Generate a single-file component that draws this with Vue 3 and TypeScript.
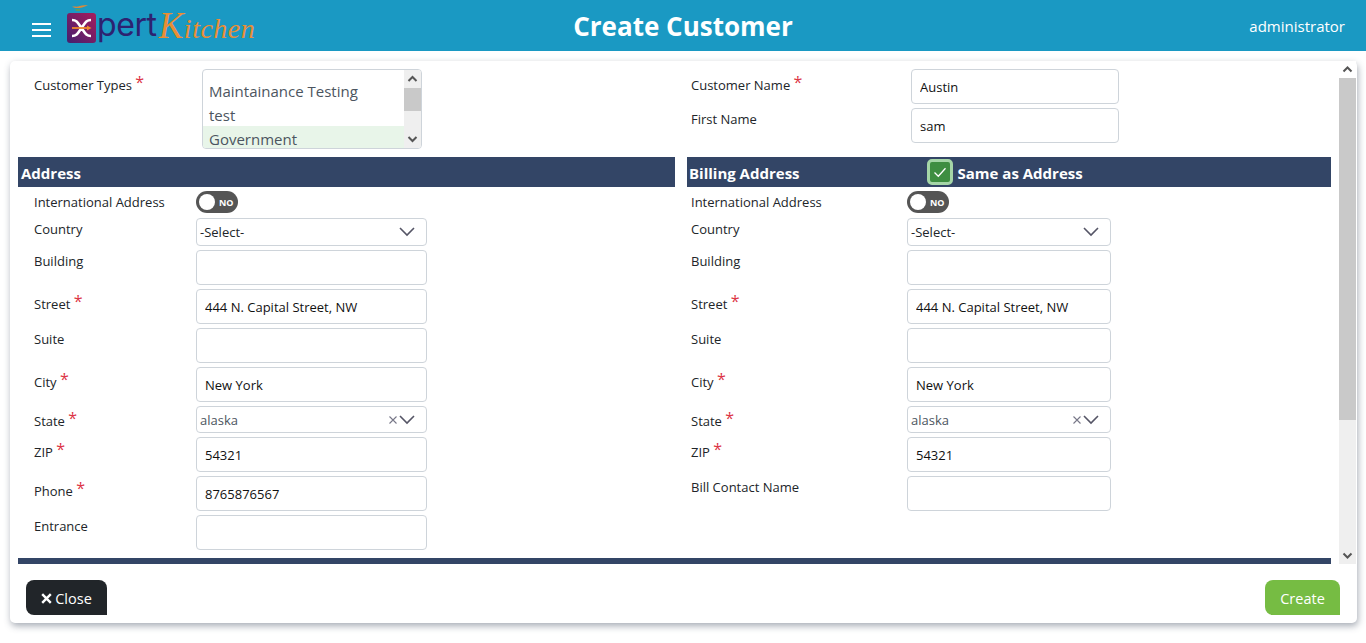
<template>
  <div class="page">
    <header class="topbar">
      <div class="brand">
        <button class="burger" aria-label="menu"><span></span><span></span><span></span></button>
        <div class="logo">
          <svg class="logo-mark" width="32" height="44" viewBox="0 0 32 44">
            <defs>
              <linearGradient id="markFill" x1="0" y1="1" x2="1" y2="0">
                <stop offset="0" stop-color="#43206f" />
                <stop offset="1" stop-color="#a81c5c" />
              </linearGradient>
            </defs>
            <path d="M5 7c2-1 4 0 6-.5s5-1.500 10-1.500c-2 1-4 2-6 2.500s-3 .5-5 .5-3-.5-5-1z" fill="#d98a3a" />
            <path d="M8 9h5v2H9z" fill="#5c9a68" />
            <rect x="0" y="13" width="29" height="30" rx="3" fill="url(#markFill)" />
            <path d="M5 20c5 0 6 3 9.500 8 -3.500 5-4.500 8-9.500 8M24 20c-5 0-6 3-9.500 8 3.500 5 4.500 8 9.500 8" fill="none" stroke="#fff" stroke-width="2.600" />
            <path d="M5 28h17" stroke="#ee8a2c" stroke-width="1.800" />
            <path d="M20 25.500l4.500 2.500-4.500 2.500z" fill="#ee8a2c" />
          </svg>
          <span class="logo-pert">pert</span>
          <span class="logo-kitchen">Kitchen</span>
        </div>
      </div>
      <h1 class="title">Create Customer</h1>
      <div class="user">administrator</div>
    </header>

    <main class="panel">
      <div class="body">
        <div class="content">
          <section class="top-row">
            <div class="top-left">
              <label class="top-label">Customer Types <i>*</i></label>
              <div class="listbox">
                <div class="list-items">
                  <div class="opt blank"></div>
                  <div class="opt">Maintainance Testing</div>
                  <div class="opt">test</div>
                  <div class="opt picked">Government</div>
                </div>
                <div class="list-bar">
                  <svg width="17" height="18" viewBox="0 0 17 18"><path d="M4.500 11l4-4 4 4" fill="none" stroke="#555" stroke-width="2" /></svg>
                  <div class="list-track"><div class="list-thumb"></div></div>
                  <svg width="17" height="18" viewBox="0 0 17 18"><path d="M4.500 7l4 4 4-4" fill="none" stroke="#555" stroke-width="2" /></svg>
                </div>
              </div>
            </div>
            <div class="top-right">
              <div class="name-row">
                <label class="name-label first">Customer Name <i>*</i></label>
                <input class="text-input name-input" value="Austin" />
              </div>
              <div class="name-row">
                <label class="name-label">First Name</label>
                <input class="text-input name-input" value="sam" />
              </div>
            </div>
          </section>

          <section class="columns">
            <div v-for="col in columns" :key="col.id" class="col" :class="col.id">
              <div class="band">
                <span class="band-title">{{ col.title }}</span>
                <template v-if="col.id === 'billing'">
                  <span class="check">
                    <svg width="18" height="18" viewBox="0 0 18 18"><path d="M3.500 9.500l3.800 3.800 7.200-8" fill="none" stroke="#fff" stroke-width="1.300" /></svg>
                  </span>
                  <span class="band-title">Same as Address</span>
                </template>
              </div>

              <div class="field intl">
                <label>International Address</label>
                <div class="toggle"><span class="knob"></span><span class="toggle-text">NO</span></div>
              </div>

              <div
                v-for="f in col.fields"
                :key="f.label"
                class="field"
                :class="{ req: f.required, 'has-select': f.kind === 'select' }"
              >
                <label>{{ f.label }} <i v-if="f.required">*</i></label>
                <div v-if="f.kind === 'select'" class="select">
                  <span>-Select-</span>
                  <svg width="16" height="10" viewBox="0 0 16 10"><path d="M1 1l7 7 7-7" fill="none" stroke="#556" stroke-width="1.600" /></svg>
                </div>
                <div v-else-if="f.kind === 'combo'" class="select combo">
                  <span>{{ f.value }}</span>
                  <span class="combo-icons">
                    <svg width="10" height="10" viewBox="0 0 10 10"><path d="M1.500 1.500l7 7M8.500 1.500l-7 7" stroke="#778" stroke-width="1.100" /></svg>
                    <svg width="16" height="10" viewBox="0 0 16 10"><path d="M1 1l7 7 7-7" fill="none" stroke="#556" stroke-width="1.600" /></svg>
                  </span>
                </div>
                <input v-else class="text-input" :value="f.value" />
              </div>
            </div>
          </section>
          <div class="band-end"></div>
        </div>

        <div class="scrollbar">
          <svg width="17" height="17" viewBox="0 0 17 17"><path d="M4.500 10.500l4-4 4 4" fill="none" stroke="#555" stroke-width="2" /></svg>
          <div class="track"><div class="thumb"></div></div>
          <svg width="17" height="17" viewBox="0 0 17 17"><path d="M4.500 6.500l4 4 4-4" fill="none" stroke="#555" stroke-width="2" /></svg>
        </div>
      </div>

      <footer class="actions">
        <button class="btn close"><svg width="11" height="11" viewBox="0 0 11 11"><path d="M1.200 1.200l8.600 8.600M9.800 1.200l-8.600 8.600" stroke="#fff" stroke-width="2.400" /></svg>Close</button>
        <button class="btn create">Create</button>
      </footer>
    </main>
  </div>
</template>

<script setup lang="ts">
type Field = {
  label: string;
  value?: string;
  required?: boolean;
  kind?: 'select' | 'combo';
};

const shared: Field[] = [
  { label: 'Country', kind: 'select' },
  { label: 'Building' },
  { label: 'Street', value: '444 N. Capital Street, NW', required: true },
  { label: 'Suite' },
  { label: 'City', value: 'New York', required: true },
  { label: 'State', value: 'alaska', required: true, kind: 'combo' },
  { label: 'ZIP', value: '54321', required: true },
];

const columns = [
  {
    id: 'address',
    title: 'Address',
    fields: [
      ...shared,
      { label: 'Phone', value: '8765876567', required: true },
      { label: 'Entrance' },
    ] as Field[],
  },
  {
    id: 'billing',
    title: 'Billing Address',
    fields: [...shared, { label: 'Bill Contact Name' }] as Field[],
  },
];
</script>

<style scoped>
.page {
  height: 643px;
  display: flex;
  flex-direction: column;
  font-family: "Open Sans", "Noto Sans", sans-serif;
  font-size: 13px;
  color: #212529;
}

.topbar {
  position: relative;
  height: 51px;
  flex: none;
  display: flex;
  align-items: center;
  justify-content: space-between;
  background: #1a99c3;
  color: #fff;
  padding: 0 21px 0 32px;
}

.brand {
  display: flex;
  align-items: center;
}

.burger {
  width: 19px;
  margin: 9px 16px 0 0;
  padding: 0;
  border: 0;
  background: none;
  display: flex;
  flex-direction: column;
  gap: 4px;
}

.burger span {
  height: 2px;
  background: #fff;
}

.logo {
  display: flex;
  align-items: flex-end;
  height: 51px;
}

.logo-mark {
  margin: 0 0 7px 0;
}

.logo-pert {
  font-family: "Inter", sans-serif;
  font-size: 32px;
  line-height: 40px;
  color: #2d2270;
  margin: 0 0 6px -2px;
  letter-spacing: -0.4px;
}

.logo-kitchen {
  font-family: "Liberation Serif", serif;
  font-style: italic;
  font-size: 28px;
  line-height: 38px;
  color: #e98e35;
  margin: 0 0 3px 2px;
  letter-spacing: 0.5px;
}

.logo-kitchen::first-letter {
  font-size: 37px;
}

.title {
  position: absolute;
  left: 0;
  right: 0;
  margin: 0;
  text-align: center;
  font-size: 26px;
  font-weight: 700;
}

.user {
  font-size: 15px;
}

.panel {
  margin: 10px 9px 0 10px;
  height: 562px;
  box-sizing: border-box;
  background: #fff;
  border-radius: 5px;
  box-shadow: 1px 3px 7px rgba(60, 70, 90, 0.45);
  display: flex;
  flex-direction: column;
}

.body {
  height: 503px;
  display: flex;
  overflow: hidden;
}

.content {
  width: 1313px;
  margin: 0 8px;
  flex: none;
}

.scrollbar {
  width: 17px;
  flex: none;
  display: flex;
  flex-direction: column;
  background: #efefef;
}

.scrollbar svg {
  flex: none;
  background: #fff;
}

.scrollbar svg:last-child {
  background: #efefef;
}

.track {
  flex: 1;
}

.thumb {
  height: 342px;
  background: #c9c9c9;
}

.top-row {
  height: 96px;
  display: flex;
  gap: 12px;
}

.top-left {
  width: 657px;
  box-sizing: border-box;
  padding: 8px 0 0 16px;
  display: flex;
}

.top-label {
  width: 168px;
  padding-top: 7px;
  line-height: 18px;
}

i {
  color: #dc3545;
  font-style: normal;
  font-size: 16px;
  line-height: 10px;
  vertical-align: 2px;
}

.listbox {
  width: 220px;
  height: 80px;
  box-sizing: border-box;
  border: 1px solid #ced4da;
  border-radius: 4px;
  display: flex;
  overflow: hidden;
}

.list-items {
  flex: 1;
  overflow: hidden;
}

.opt {
  height: 24px;
  line-height: 24px;
  padding-left: 6px;
  font-size: 15px;
  color: #4c5560;
}

.opt.blank {
  height: 9px;
}

.opt.picked {
  background: #e8f5e9;
  margin-top: -1px;
  line-height: 26px;
}

.list-bar {
  width: 17px;
  flex: none;
  background: #efefef;
  display: flex;
  flex-direction: column;
}

.list-bar svg {
  flex: none;
}

.list-track {
  flex: 1;
}

.list-thumb {
  height: 23px;
  background: #c9c9c9;
}

.top-right {
  padding: 8px 0 0 4px;
  display: flex;
  flex-direction: column;
  gap: 4px;
}

.name-row {
  display: flex;
}

.name-label {
  width: 220px;
  padding-top: 2px;
  line-height: 18px;
}

.name-label.first {
  padding-top: 7px;
}

.text-input {
  width: 231px;
  height: 35px;
  box-sizing: border-box;
  border: 1px solid #ced4da;
  border-radius: 4px;
  padding: 1px 8px 0;
  font: inherit;
  color: #111;
  outline: none;
  background: #fff;
}

.name-input {
  width: 208px;
}

.columns {
  display: flex;
  gap: 12px;
}

.col.address {
  width: 657px;
}

.col.billing {
  width: 644px;
}

.band {
  height: 30px;
  background: #334566;
  color: #fff;
  display: flex;
  align-items: center;
  padding-left: 3px;
}

.band-title {
  font-size: 15px;
  font-weight: 700;
  padding-top: 1px;
}

.billing .band {
  padding-left: 2px;
}

.check {
  box-sizing: border-box;
  width: 26px;
  height: 26px;
  margin: 0 5px 0 127px;
  border: 3px solid #a5d6a7;
  border-radius: 5px;
  background: #3e8e41;
  display: flex;
  align-items: center;
  justify-content: center;
}

.field {
  display: flex;
  margin-top: 4px;
  padding-left: 16px;
}

.field label {
  width: 162px;
  flex: none;
  padding-top: 2px;
  line-height: 18px;
}

.field.req label {
  padding-top: 6px;
}

.billing .field {
  padding-left: 4px;
}

.billing .field label {
  width: 216px;
}

.billing .text-input,
.billing .select {
  width: 204px;
}

.field.intl {
  height: 22px;
}

.field.has-select {
  margin-top: 5px;
}

.toggle {
  width: 42px;
  height: 22px;
  border-radius: 11px;
  background: #555;
  display: flex;
  align-items: center;
  padding-left: 3px;
  box-sizing: border-box;
}

.knob {
  width: 16px;
  height: 16px;
  border-radius: 50%;
  background: #fff;
}

.toggle-text {
  color: #fff;
  font-size: 9px;
  font-weight: 700;
  margin-left: 4px;
}

.select {
  width: 231px;
  height: 28px;
  box-sizing: border-box;
  border: 1px solid #ced4da;
  border-radius: 4px;
  padding: 0 11px 0 3px;
  display: flex;
  align-items: center;
  justify-content: space-between;
  background: #fff;
}

.select.combo {
  height: 27px;
  color: #4c5560;
}

.combo-icons {
  display: flex;
  align-items: center;
  gap: 1px;
}

.band-end {
  height: 6px;
  margin-top: 8px;
  background: #334566;
}

.actions {
  flex: 1;
  display: flex;
  justify-content: space-between;
  align-items: flex-start;
  padding: 16px 17px 0 16px;
}

.btn {
  height: 35px;
  border: 0;
  border-radius: 8px 8px 0 8px;
  color: #fff;
  font-family: inherit;
  font-size: 14.5px;
  padding-top: 2px;
  display: flex;
  align-items: center;
  justify-content: center;
}

.btn.close {
  width: 81px;
  background: #212529;
  gap: 3px;
}

.btn.create {
  width: 75px;
  background: #76bc43;
}
</style>

<style>
html,
body {
  margin: 0;
  background: #fff;
  overflow: hidden;
}
</style>
